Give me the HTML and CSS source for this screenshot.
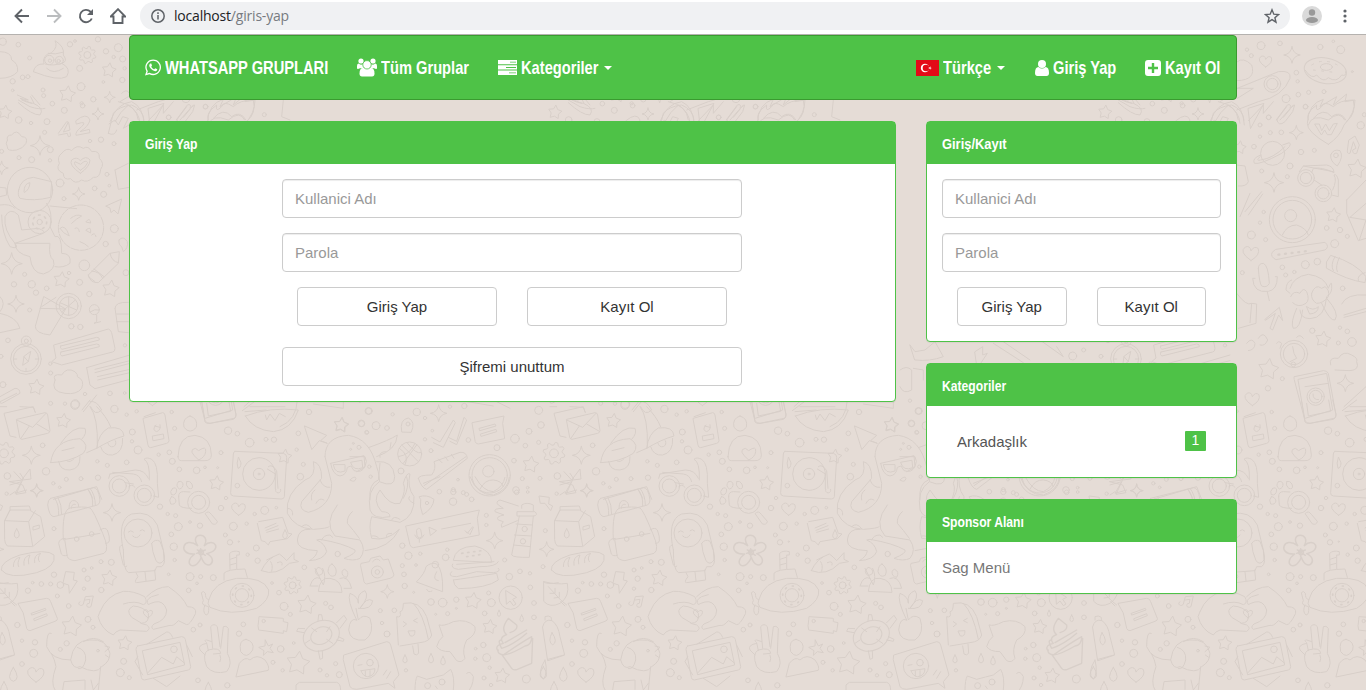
FILE: index.html
```html
<!DOCTYPE html>
<html lang="tr">
<head>
<meta charset="utf-8">
<title>Giriş Yap</title>
<link rel="stylesheet" href="styles.css">
</head>
<body>
<svg class="wallpaper" width="1366" height="690" viewBox="0 0 1366 690" aria-hidden="true">
<defs><g id="tile">
<g transform="translate(-10 400) scale(.33333)">
<path d="M78 112L60 108L42 40L130 20L136 38M80 58L165 38Q172 38 173 45L180 92Q180 98 173 100L96 118Q90 118 89 112Z M80 60L128 82L168 40M92 116L118 78M178 94L140 72"/>
<path d="M182 188Q190 120 270 116Q300 135 280 160Q240 186 182 188ZM212 130Q250 75 285 85Q292 100 275 118M216 152L252 143M206 184Q210 212 240 210Q272 206 270 170M290 158L322 144Q325 50 300 20M320 20Q350 50 362 80M320 145Q325 100 355 84Q400 78 402 108Q365 118 320 145M332 140Q340 168 368 165Q400 158 398 115M230 182Q240 190 252 176M354 130A12 12 0 1 0 376 122M276 30L300 0M300 5Q320 0 335 30Q315 50 302 20"/>
<path d="M460 55L518 38Q524 38 525 45L537 122Q537 128 530 130L482 143Q475 143 474 136Z M462 50L496 38M488 108L520 102L522 116L490 122ZM498 75Q484 90 500 95Q514 90 510 74M494 78L510 82"/>
<path d="M600 48Q625 55 619 82Q600 105 582 82Q576 55 600 48ZM564 170Q566 106 615 106Q664 112 664 165Q664 182 645 182H575Q564 182 564 170ZM626 180Q590 150 616 145L626 152Q650 135 647 155Q645 172 626 180Z"/>
<path d="M635 5L645 66Q650 72 660 70L732 55Q740 52 738 42L728 0M650 10L655 48L722 34L716 0M766 48Q840 20 925 30Q905 90 850 95Q790 90 766 48ZM826 45L830 60L840 42L855 62L868 40L886 50M757 32L800 0M780 20H885"/>
<path d="M735 154L880 160Q890 162 890 172L883 290Q882 297 874 297L730 288Q721 287 722 278L730 162Q731 154 735 154ZM835 200Q845 190 860 212L864 265M832 207L856 222V266M745 172Q738 190 744 205Q752 205 753 190ZM857 268A8 8 0 1 0 872 268"/><circle cx="807" cy="222" r="49"/><circle cx="807" cy="222" r="17"/><circle cx="807" cy="222" r="3"/><circle cx="742" cy="257" r="7"/>
<path d="M72 215L95 240L120 207L123 237L58 245L98 255L108 278L78 283L100 235M100 235L90 220"/>
<path d="M360 222L436 210Q465 210 475 235M368 217L430 222Q450 225 455 245M478 240Q480 185 462 178Q470 170 485 178Q505 190 502 250L506 292L490 288M405 248L430 252M356 235L360 222M416 260Q425 250 435 262"/><circle cx="388" cy="258" r="31"/><circle cx="388" cy="258" r="21"/><circle cx="463" cy="286" r="31"/><circle cx="463" cy="286" r="21"/>
<path d="M182 295L310 263Q325 262 330 300Q330 315 315 317L192 350Q178 350 173 315Q173 300 182 295ZM194 294Q208 315 206 346M203 290Q216 315 215 343M293 267Q310 285 308 318M300 265Q316 285 316 316M237 325Q237 298 255 302Q267 308 266 320M244 325Q245 309 256 313"/>
<path d="M220 420Q215 330 240 324Q280 318 300 324Q310 330 338 400Q360 450 342 460L255 482Q235 480 232 470L224 418Q280 410 330 400M226 415Q208 415 206 430L214 462Q220 470 231 466M330 390Q345 380 352 390Q360 410 358 423Q355 432 346 430"/><circle cx="260" cy="417" r="7"/><circle cx="305" cy="402" r="7"/>
<path d="M44 362L60 330L118 330L152 350L164 410L128 440L52 438Q44 430 44 420ZM44 362L116 365L128 438M116 365L136 332M60 330L60 320L118 318L122 330M60 330L44 362M130 380L148 375V385L130 390ZM80 386Q65 410 80 414Q96 410 80 386"/>
<path d="M34 510Q30 485 90 465Q170 445 192 465Q200 500 140 518Q55 540 34 510ZM70 500Q70 475 90 472Q80 490 86 500M102 496Q98 470 120 465Q112 480 116 492M134 488Q130 465 152 460Q140 475 148 485"/>
<path d="M400 450Q380 360 425 342Q480 330 502 375L520 450Q530 490 515 500L500 500L495 512L415 518Q400 510 400 450ZM398 435Q385 435 390 455L400 495Q410 505 410 498M485 430Q495 415 510 424Q524 450 522 480Q510 498 498 482Q486 455 485 430M438 518L444 530Q430 548 440 548L497 540L494 510M465 516L468 542M415 396Q422 388 430 396M450 392Q457 385 464 393M428 408Q441 420 450 405"/><circle cx="444" cy="399" r="42"/>
<path d="M566 290Q565 275 580 275L600 276M566 290L568 315Q572 325 605 325M548 265Q538 275 544 284Q558 288 560 270Q558 260 548 265M565 245Q555 258 568 267Q580 265 579 250Q574 240 565 245M590 245Q585 255 596 265Q610 270 607 255Q600 240 590 245M544 290Q535 300 542 312Q555 315 558 303Q555 290 544 290M646 340Q655 330 664 343L682 364Q680 376 668 372Z"/><circle cx="626" cy="307" r="33"/><circle cx="626" cy="307" r="21"/>
<g stroke-width="4.5"><path d="M623 437C595 395 665 395 643 437C672 410 700 450 650 461C690 480 650 520 634 472C615 520 575 490 614 462C560 465 580 405 623 437ZM632 446V470M620 460L646 450M622 450L646 466"/><circle cx="633" cy="457" r="7"/></g>
<path d="M656 600Q670 545 740 535Q820 530 836 570Q840 600 800 625Q720 650 660 622Q650 610 656 600ZM702 540V520Q710 508 765 507L772 532M720 508L719 460Q730 450 748 455V465H740L740 506M720 478L738 472M720 495L738 490M656 600Q645 595 646 580Q640 570 634 578L640 602Q630 615 656 620Q658 645 648 645Q636 635 645 615"/><circle cx="756" cy="586" r="36"/><circle cx="756" cy="586" r="20"/><circle cx="756" cy="586" r="28" stroke-dasharray="3 19" stroke-width="5"/>
<path d="M330 635Q350 585 400 574Q430 572 464 590Q475 610 460 614Q435 600 400 612M330 635L324 650Q335 690 370 705Q375 695 390 690L470 694Q485 685 470 675L452 670Q480 670 475 640Q460 620 430 618Q405 630 425 652L452 668M470 590Q500 560 535 560Q580 590 592 620Q620 620 617 640Q600 675 590 674L565 662Q550 680 540 676L490 688Q480 682 492 672Q530 660 530 630Q520 600 495 606Q480 610 475 614Q465 600 485 590L505 584"/>
<path d="M806 365L878 352L895 400L906 402L892 416L840 425L835 435L825 425L814 422L802 370M825 384L858 370M828 391L864 377M830 397L866 387"/>
<path d="M814 512Q830 475 868 462Q880 470 890 482L912 458L912 478L926 485L898 490Q860 530 814 512ZM842 485Q850 495 845 514M862 488Q880 480 876 495M830 480L850 470"/>
<path d="M85 610L170 595Q180 595 182 605L202 655Q204 662 195 664L120 692Q112 692 110 685L100 640ZM124 640L166 625L168 630L126 645ZM132 656L170 641L172 647L134 662Z"/>
<path d="M12 545Q50 555 82 550Q90 590 60 610Q30 625 12 605ZM25 560L62 600L80 615M30 580H45V565M42 594L58 592L58 577M62 605L75 618"/>
<path d="M15 660V650Q25 645 34 652V660M8 680Q15 655 36 662Q55 675 60 710L74 765L24 782ZM36 698Q22 725 38 735Q55 725 36 698ZM24 778L72 765"/>
<path d="M228 515L253 517L250 540L262 543L238 580L236 555L220 550ZM270 605A7 6 0 1 0 280 612L286 590L310 588L304 615A7 6 0 1 1 298 610L300 598L286 600"/>
<path d="M184 700Q170 690 170 740Q185 780 242 780Q250 720 300 720Q350 715 360 760Q360 785 335 800Q320 825 270 800Q250 810 242 780M262 742Q290 750 287 780Q280 810 265 806M184 760Q195 780 198 800Q180 850 195 870M332 800L325 870M345 738L360 742L345 755M346 765L356 772M218 870L222 845L285 840V868M303 840L310 870L325 850M280 725Q310 705 340 725"/><circle cx="324" cy="752" r="4"/>
<path d="M443 738L575 710Q584 710 586 718L602 800Q602 808 595 810L463 840Q455 840 454 832L438 748Q438 740 443 738ZM458 752L570 727L584 795L474 824ZM474 818L515 772L550 792L560 770L584 790M470 733L530 696Q540 694 548 712M490 835L530 860L570 828M590 735L607 770M443 770L435 785L458 825"/><circle cx="552" cy="748" r="10"/>
<path d="M668 745L662 680Q672 668 682 680L690 740M692 745L700 680Q708 675 715 685L712 760Q730 790 710 815Q670 825 650 800Q635 760 655 750Q690 740 692 760L670 762M655 752L650 728Q640 720 650 720L665 725M650 730Q622 735 630 750L645 765M690 765Q695 775 690 785"/>
<path d="M768 718Q795 725 788 750Q770 780 752 755Q745 720 768 718ZM738 830L748 790Q765 768 780 780Q800 760 825 780Q840 800 835 810ZM808 650L880 655L880 665L894 668L890 695L880 692V700L806 690Q802 680 806 660ZM826 720L835 738L848 732L840 745L850 758L832 755L820 766L822 752L806 742L824 738Z"/><circle cx="821" cy="663" r="5"/>
<path d="M944 78L1010 106L992 122L1012 130L988 122L966 148Z"/>
<path d="M998 505Q1010 530 1000 555Q985 525 975 505M985 502Q1000 505 998 520Q980 535 976 515ZM1026 492Q1045 505 1036 526Q1020 535 1014 515Q1015 495 1026 492ZM1064 508Q1080 515 1070 532Q1055 530 1056 515ZM985 573Q990 530 1020 535Q1055 540 1056 576ZM960 558Q970 525 990 535M984 558H962M1050 535Q1075 525 1085 565L1062 565"/>
<path d="M1100 660Q1070 600 1080 580Q1105 590 1105 610Q1100 580 1125 572Q1140 590 1110 625Q1130 590 1148 602Q1145 630 1105 625M1098 625L1105 660Q1120 640 1140 655Q1155 700 1125 720Q1080 725 1076 690Q1080 650 1100 660"/>
<ellipse cx="994" cy="707" rx="56" ry="44" transform="rotate(-25 994 707)"/><ellipse cx="994" cy="707" rx="33" ry="25" transform="rotate(-25 994 707)"/><path d="M984 662L986 644L995 644L998 660M1040 668L1062 646L1070 658L1050 685M942 698L920 694L924 685L944 686M1045 710L1062 718L1060 724L1040 720M985 752L990 778L998 775L997 752M945 730L960 720M965 684L980 695M1020 680L1010 695M1028 730L1010 718"/>
</g>
<g transform="translate(280 400) scale(.33333)">
<path d="M135 170Q135 110 205 106Q270 115 290 200Q300 230 298 245Q345 265 344 230Q340 180 290 185M135 170L155 250Q155 320 85 337Q55 330 65 305L125 235Q125 190 100 185Q110 230 75 240Q15 280 22 340Q45 385 100 388Q145 385 148 380M152 190L252 167L255 200Q245 220 222 212L213 198L202 202Q200 225 180 228Q158 225 152 190ZM160 195Q165 225 195 213V195ZM212 188Q220 215 248 203L246 182ZM120 240Q130 265 150 262M172 315Q130 370 165 408L240 420Q260 450 240 475Q220 485 192 475Q230 460 225 450Q190 430 120 418L110 420Q135 430 140 455Q130 480 88 482Q110 470 112 452Q50 450 52 420Q55 385 90 388M290 170Q350 150 352 105Q330 120 265 143M298 245Q260 270 270 330Q280 360 330 350Q330 335 305 335Q275 300 300 270Q330 320 360 310Q380 270 370 250Q380 215 390 222Q380 260 402 290Q405 350 360 367L275 350Q265 380 275 415Q320 425 358 388Q330 445 255 452M217 335Q200 350 202 370Q220 390 238 415M300 172Q295 155 318 155M330 145L333 128M95 300Q90 280 105 270M108 310Q118 290 132 300M22 325Q40 325 38 345M65 380Q80 365 95 386M335 360Q340 345 360 358M388 290Q380 300 402 310M275 408Q290 405 298 416M320 410Q315 400 335 400M210 240Q225 225 228 235Q225 250 210 240M125 420Q130 405 150 405L158 412"/><circle cx="220" cy="130" r="3"/><circle cx="237" cy="142" r="6"/><circle cx="212" cy="148" r="3"/><circle cx="268" cy="200" r="5"/><circle cx="272" cy="230" r="5"/>
<circle cx="389" cy="162" r="36"/><path d="M358 145Q390 165 375 195M355 170Q390 165 405 130M380 127Q410 165 423 158M370 190L410 135M365 135L415 185"/>
<path d="M455 112L480 126L520 60L526 68L490 142L460 128M505 112L530 124L552 52L560 60L530 134L510 124"/>
<path d="M577 68L672 48L668 70L674 116L595 132Q588 132 586 126ZM598 85L645 72L648 78L600 92ZM602 102L648 88L650 95L604 109Z"/>
<path d="M415 235Q415 225 455 225Q470 205 462 185L540 157Q560 155 562 175L440 268Q425 265 415 235ZM432 257L558 170M475 177L486 188M495 170L504 182M514 163L522 175"/>
<circle cx="629" cy="226" r="62"/><circle cx="629" cy="226" r="53"/><circle cx="625" cy="214" r="17"/><path d="M600 267Q615 238 640 240Q665 242 670 260"/>
<path d="M378 378L598 330L592 355L598 405L400 443Q392 442 390 435ZM448 382L470 392L452 406ZM485 387L572 370M410 390Q415 380 422 388L426 410Q418 418 412 410ZM404 405Q418 430 432 405M418 418V427M555 392L562 400L578 380M562 396L570 404L580 382M418 290Q440 282 462 298Q460 325 428 344Q418 320 422 300Z"/><circle cx="441" cy="309" r="5"/>
<path d="M725 325V315Q740 305 760 315V332M712 335L765 335Q775 345 762 348H712ZM718 348L695 465Q700 473 748 472L760 348M708 372L758 375M703 405L755 408M700 435L752 440M715 318L660 300Q645 305 655 315L670 325Q640 325 645 335L672 345Q645 350 655 360L670 365Q660 375 665 382L712 362"/><circle cx="734" cy="387" r="8"/><circle cx="729" cy="424" r="8"/>
<path d="M520 480Q525 440 585 438Q635 450 635 486ZM518 492Q510 505 535 508L600 500Q650 500 655 485M515 515Q500 530 530 530L590 515L640 518Q665 515 655 505M520 540Q560 535 650 520L655 540Q620 565 535 566Q520 555 520 540M530 493L642 485"/><path stroke-dasharray="4 14" stroke-width="5" d="M545 460L605 452M560 470L600 464"/>
<path d="M410 545Q435 520 438 500Q455 485 470 492Q490 510 488 574ZM440 568Q445 580 456 573M470 515Q455 540 475 542"/><circle cx="466" cy="494" r="10"/>
<path d="M244 490L268 485L272 475L300 468L310 480L325 477L342 525Q340 533 330 535L260 552Q255 552 252 545L242 498ZM278 485Q290 470 300 482"/><circle cx="292" cy="516" r="18"/><circle cx="292" cy="516" r="7"/>
<circle cx="692" cy="593" r="35"/><path d="M678 572L710 592L698 598L708 612L700 617L690 603L680 612Z"/>
<path d="M355 735L350 650Q365 655 360 635Q370 635 370 610Q420 600 440 650L455 705Q450 725 420 728L360 738M400 610Q430 640 445 718M398 738L402 762Q410 768 416 760L414 732M370 665L380 672L370 680M412 655L400 662L412 668M385 693L405 692Q405 712 392 708Z"/>
<path d="M478 675Q490 680 520 665Q560 655 585 680Q590 705 560 720Q545 750 555 775Q545 790 530 782L510 755Q480 755 470 740Q475 720 488 710Z"/>
<path stroke-width="4" d="M652 750Q645 735 670 730Q655 712 680 704Q660 688 685 655L710 675Q715 690 690 698M675 728L740 690M665 720Q650 720 665 745Q700 735 740 700M655 750Q650 760 670 765Q720 730 755 710Q755 735 735 738Q680 770 665 763L695 805Q700 812 712 808L755 790L758 715"/>
<path d="M192 765L320 725Q330 725 332 735L357 825L340 845L345 865L325 850L230 868Q215 868 210 860L190 780Z"/><circle cx="258" cy="798" r="38"/><circle cx="270" cy="788" r="10"/><path d="M234 796L246 794M243 812L285 806Q285 828 262 830Q248 828 243 812M256 813V828M270 812V828M310 825L320 810M320 835L332 815"/>
<path d="M405 870Q405 840 412 828L440 838Q470 830 490 825L512 808Q525 830 520 870M560 820Q570 810 580 830Q580 860 560 880M48 870V855L58 847H170Q182 850 182 870M466 858L472 866M365 95Q358 58 385 54Q408 65 394 96ZM790 545Q800 555 835 548M795 780Q770 820 790 838Q805 820 795 780"/><circle cx="443" cy="857" r="9"/><circle cx="486" cy="846" r="9"/><circle cx="384" cy="72" r="6"/>
<path d="M0 80Q50 60 52 0M100 12L190 25V0M545 2L640 18M640 0L690 25M778 288L808 292L806 312L818 318L812 332L795 310H782Z"/>
</g>
<g transform="translate(0 100) scale(.33333)">
<circle cx="90" cy="270" r="68"/><path d="M56 270Q62 235 100 232L155 245L152 292Q100 305 60 295Q52 285 56 270ZM72 275Q72 250 90 248Q88 270 74 277ZM0 262L18 264L20 285L0 290M0 315Q30 310 45 325M5 345Q5 400 30 440Q60 450 45 430Q10 390 15 350Q30 320 55 345L65 390L115 385Q140 395 130 400L45 430Q45 460 90 470Q95 520 130 522Q170 510 160 480Q145 470 150 430L45 430M140 310Q160 340 150 380L165 410Q185 400 185 460Q215 460 210 490Q190 505 165 500M150 318L230 326"/><circle cx="119" cy="366" r="35"/><circle cx="119" cy="366" r="8"/><circle cx="119" cy="366" r="21" stroke-dasharray="5 14" stroke-width="5"/>
<circle cx="243" cy="383" r="68" stroke-dasharray="24 4"/><path d="M180 385Q195 370 208 408Q188 400 180 385M212 355Q230 340 245 348Q230 355 215 370M258 390Q275 375 272 398ZM258 365Q270 350 272 368ZM225 385Q235 378 238 395M275 405Q285 395 288 410M240 425Q255 430 265 440"/>
<path d="M185 160Q200 140 215 152Q230 132 250 145Q265 135 275 155Q300 150 298 175Q315 190 302 208Q300 235 280 232Q262 250 245 240Q225 255 212 236Q190 242 190 220Q165 210 178 190Q170 170 185 160Z"/><path d="M241 220Q205 195 215 180Q230 168 241 182Q258 165 270 180Q270 200 241 220ZM241 211Q218 193 225 185L242 193Q258 177 263 188Q258 202 241 211"/>
<path d="M175 100L200 65L205 66L190 96L210 90L206 68M176 105L202 100L205 110L212 108L210 98M228 62Q260 35 270 60Q265 80 240 95L268 88L270 98L228 106Q225 95 245 80Q265 60 230 72Z"/>
<path d="M22 120Q18 105 35 105Q50 85 65 110Q85 110 78 130Q70 145 50 150Q20 155 22 140Q15 130 22 120ZM65 0Q85 10 100 10Q135 25 120 45Q95 45 55 8"/>
<path d="M325 100L340 40Q355 20 395 15Q430 30 432 60M325 100Q345 110 350 90M327 72L345 60L355 75L368 50L385 55L370 85L395 70M355 5Q410 15 415 60M445 62L490 15V40L520 5M530 60L560 20M540 60L580 15M625 60Q615 40 650 15Q645 40 665 20Q670 0 700 20Q720 0 760 0Q770 40 740 65M640 55Q670 20 695 50Q720 30 738 60M850 0L845 50L870 60"/>
<path d="M318 318L365 297L354 342L342 330L333 338L330 325ZM345 210L385 190M345 210L355 268L388 262M265 525L330 460L358 455L355 490L295 548Q270 550 265 525ZM275 513Q300 515 308 535M330 460Q335 485 355 488M282 507L312 530M265 530L285 545"/>
<path d="M132 590L197 627L150 705Q105 700 106 680ZM120 625L195 627M168 592L125 620"/><circle cx="206" cy="618" r="38"/><circle cx="206" cy="618" r="28"/><path d="M206 590V646M180 608L230 630M185 636L226 600"/><circle cx="283" cy="629" r="15"/><path d="M270 636Q285 625 297 630M290 645V665L282 670L302 665"/>
<circle cx="78" cy="777" r="46"/><circle cx="78" cy="777" r="38"/><circle cx="79" cy="723" r="15"/><circle cx="79" cy="723" r="6"/><path d="M92 755L85 785L68 796L72 770ZM72 770L85 785M42 777H50M106 777H114M78 805V812"/>
<path d="M162 735L325 687Q333 690 335 698L345 745Q345 755 338 756L185 795L155 785L167 775ZM182 738L290 712Q300 712 298 720L186 748Q178 745 182 738ZM183 756L290 732Q300 732 298 740L186 768Q178 765 183 756ZM260 803L390 765M260 803L270 855L285 866L390 838M285 808L390 782M292 830L390 808M285 818L390 790M293 840L390 818"/>
<path d="M165 840Q155 820 185 825Q200 800 225 815Q235 825 232 830Q255 840 245 865Q230 885 195 880Q150 875 165 840ZM345 625Q345 605 385 607M345 625L355 695L385 698M350 642H385M350 665H385M0 640Q50 650 60 685L0 698M0 590Q20 610 0 635M0 890L45 865Q60 865 60 880L15 905Q0 915 0 905L50 880M0 920H20M60 920L100 922L105 935M250 935L290 885M357 420Q370 405 382 425Q385 445 370 455L365 440Q355 435 357 420"/>
</g>
<g transform="scale(.33333)">
<path d="M0 155Q35 155 35 180Q55 190 53 215Q35 235 0 235M100 215Q105 190 132 192Q125 165 155 158Q175 140 165 122Q195 140 190 165Q205 185 185 190Q215 205 200 230Q175 245 100 215M135 192Q160 200 190 188M145 160Q165 165 188 157M140 205Q160 225 190 205M52 285L85 300L60 295L95 310M55 300L90 320Q120 330 135 325M92 290L102 310M120 315L95 285M360 305L385 290M365 280Q380 265 387 278"/><circle cx="148" cy="180" r="14"/><circle cx="178" cy="181" r="12"/><circle cx="150" cy="182" r="5"/><circle cx="176" cy="183" r="5"/>
</g>
<g transform="translate(100 30) scale(.33333)">
<ellipse cx="376" cy="122" rx="64" ry="38" transform="rotate(10 376 122)"/><ellipse cx="379" cy="111" rx="18" ry="10"/><path d="M315 120Q335 150 350 135Q370 160 385 143Q410 160 425 135Q440 140 437 125"/><path stroke-dasharray="6 19" d="M335 105Q375 80 420 110M340 120L412 128"/>
<path d="M112 95Q130 80 155 105Q170 150 112 152M112 175L235 125Q275 120 270 145Q250 200 175 215L110 240M112 175H160L112 205M145 235L192 220L152 295Z"/><circle cx="217" cy="162" r="25"/><circle cx="217" cy="162" r="17"/>
<path d="M30 275Q50 220 95 215Q130 230 133 285M45 275Q60 245 85 225M85 225Q118 245 120 280"/>
<path d="M230 268L262 225Q275 220 270 235L284 225L278 245L255 275Q235 292 230 268ZM250 262L270 238"/>
<path d="M385 343Q320 305 322 280Q325 220 370 208L360 230L410 200L400 225L440 192L435 215L465 210Q465 250 432 285Q420 320 385 343ZM325 285Q335 250 385 270Q420 240 434 270M345 282H358L365 302L377 282L388 302L400 282L412 280L394 314H382L374 300L365 314Z"/>
<circle cx="218" cy="370" r="36"/><path d="M182 375Q155 385 163 400Q180 405 245 370Q280 345 268 338L248 345M180 380Q165 395 182 390Q220 385 255 350"/>
<circle cx="318" cy="444" r="25"/><circle cx="318" cy="444" r="17"/><circle cx="370" cy="490" r="25"/><circle cx="370" cy="490" r="17"/><path d="M298 425L310 408L380 405Q402 410 402 428Q365 410 340 415L335 428M310 408L400 425M342 450L365 465M395 495L415 500L415 450Q410 430 402 435Q412 450 398 480"/>
<circle cx="277" cy="569" r="69"/><circle cx="277" cy="569" r="58"/><circle cx="272" cy="557" r="18"/><path d="M247 615Q260 585 290 585Q320 595 325 615M228 658L375 637Q390 650 375 660L228 689Q210 680 216 668ZM380 695L392 676Q470 700 498 740L495 758Q440 750 380 715ZM405 680Q390 705 400 722M418 683Q405 710 412 725M475 752Q470 735 495 728"/><path d="M235 674L330 662" stroke-dasharray="3 17" stroke-width="7"/>
<path d="M175 715Q175 700 190 700Q205 705 208 760Q200 775 185 768Q178 760 175 715ZM165 745L158 745Q160 790 205 784Q232 780 232 740L226 740M202 786L208 812M195 868L238 832L248 872L236 855L218 900L210 895L226 850L198 870Z"/>
<path d="M270 775Q280 740 325 733Q375 740 385 775Q395 750 395 765Q398 790 380 800Q375 865 330 866Q300 865 300 840M270 790L258 780Q258 755 275 750M272 800Q280 780 300 790Q310 770 320 785Q330 810 318 820Q295 835 278 818M335 790Q345 760 365 775L375 770Q390 780 385 800Q370 820 350 820Q332 810 335 790M290 835Q270 880 280 895Q300 900 308 840M365 820Q390 875 405 870Q420 850 380 805M320 830Q340 845 355 830Q355 850 330 852Z"/>
<circle cx="282" cy="972" r="41"/><circle cx="282" cy="972" r="32"/><path d="M278 950L282 970L290 985L270 995M290 922Q300 910 310 925M230 940Q235 930 245 940L240 955"/>
<path d="M447 330L465 318L478 345L470 370Q458 375 458 360L468 355L460 335L450 370Q440 372 442 362ZM392 375Q400 355 420 362Q432 380 412 408Q390 395 392 375M110 405L135 408L145 455Q140 470 115 468M120 560L150 490M135 545L185 485M145 555L188 492M110 790Q140 830 155 820L170 822L168 880L115 895M155 820L150 878M440 510L498 450M440 510V550L475 632L498 625M450 562L498 570L478 630M498 520L450 562M425 822Q440 790 498 795M432 855L498 835M432 862L498 845M140 940Q155 920 165 940Q165 960 145 962M175 925Q190 900 203 930Q195 950 180 945"/><circle cx="408" cy="376" r="7"/>
</g>
<g transform="translate(-200 340) scale(.33333)">
<path d="M1183 110L1270 92Q1282 92 1285 100L1308 225Q1308 235 1300 238L1230 250Q1220 250 1215 242L1183 120ZM1195 118L1280 100L1298 210L1215 235ZM1215 140L1285 130M1332 200L1398 140M1335 215L1398 210M1292 75Q1285 50 1315 55Q1330 30 1355 45Q1375 55 1370 65Q1380 90 1350 92L1305 90"/><circle cx="1247" cy="170" r="26"/><circle cx="1247" cy="170" r="19"/><path d="M1239 162Q1238 180 1256 179"/>
<path d="M30 15L45 35L75 30L105 5L130 50Q90 65 45 60ZM225 35L248 20V45L262 40L232 85ZM310 5L390 60M280 10L370 68M420 0L490 50L470 20M0 90Q20 75 35 90V150Q10 165 0 140M40 85L70 90V120M0 350H45Q60 380 20 395M60 480Q55 430 85 420L90 370M160 475Q180 440 170 410M220 430L270 410M360 410Q380 465 430 465Q475 450 478 412M375 410Q400 455 430 455Q460 440 465 412M630 435L665 425L645 460L680 450M760 478L890 440L905 478M630 465L645 455M865 450L878 475"/>
</g>
</g></defs>
<use href="#tile" x="-550"/><use href="#tile"/><use href="#tile" x="550"/><use href="#tile" x="1100"/>
</svg>
<div class="browser">
  <div class="browser-nav">
    <svg width="16" height="16" viewBox="0 0 16 16"><path d="M15 8H2M8 1.500L1.500 8L8 14.500"/></svg>
    <svg class="faded" width="16" height="16" viewBox="0 0 16 16"><path d="M1 8H14M8 1.500L14.500 8L8 14.500"/></svg>
    <svg width="16" height="16" viewBox="0 0 16 16"><path d="M13.800 10.500A6.200 6.200 0 1 1 12.500 3.700L14 5.500"/><path class="solid" d="M15 1V7H9Z"/></svg>
    <svg width="16" height="16" viewBox="0 0 16 16"><path d="M.8 8.500L8 1.200L15.200 8.500H12.500V15H3.500V8.500Z"/></svg>
  </div>
  <div class="address">
    <svg width="14" height="14" viewBox="0 0 14 14"><circle cx="7" cy="7" r="6.200"/><path d="M7 6V10.500M7 3.300V4.900"/></svg>
    <span class="url">localhost<span>/giris-yap</span></span>
    <svg class="bookmark" width="16" height="16" viewBox="0 0 16 16"><path d="M8 1.800L9.800 6.200L14.500 6.600L10.900 9.700L12 14.200L8 11.700L4 14.200L5.100 9.700L1.500 6.600L6.200 6.200Z"/></svg>
  </div>
  <svg class="avatar" width="20" height="20" viewBox="0 0 20 20"><circle cx="10" cy="10" r="10" fill="#dadada"/><circle cx="10" cy="6.500" r="3.200" fill="#999"/><ellipse cx="10" cy="14" rx="6" ry="3" fill="#999"/></svg>
  <svg class="more" width="4" height="14" viewBox="0 0 4 14"><circle cx="2" cy="2" r="1.600"/><circle cx="2" cy="7" r="1.600"/><circle cx="2" cy="12" r="1.600"/></svg>
</div>
<div class="container">
  <nav class="navbar">
    <a class="brand"><svg width="16" height="17" viewBox="0 0 1536 1600"><path d="M985 878q13 0 97.500 44t89.500 53q2 5 2 15 0 33-17 76-16 39-71 65.500t-102 26.500q-57 0-190-62-98-45-170-118t-148-185q-72-107-71-194v-8q3-91 74-158 24-22 52-22 6 0 18 1.500t19 1.500q19 0 26.500 6.500t15.500 27.500q8 20 33 88t25 75q0 21-34.500 57.500t-34.500 46.500q0 7 5 15 34 73 102 137 56 53 151 101 12 7 22 7 15 0 54-48.500t52-48.500zm-203 530q127 0 243.500-50t200.500-134 134-200.500 50-243.500-50-243.500-134-200.500-200.500-134-243.500-50-243.500 50-200.500 134-134 200.500-50 243.500q0 203 120 368l-79 233 242-77q158 104 345 104zm0-1382q153 0 292.500 60t240.500 161 161 240.500 60 292.500-60 292.500-161 240.500-240.500 161-292.500 60q-195 0-365-94l-417 134 136-405q-108-178-108-389 0-153 60-292.500t161-240.500 240.500-161 292.500-60z"/></svg><span>WHATSAPP GRUPLARI</span></a>
    <a class="groups"><svg width="20" height="19" viewBox="0 0 20 19"><circle cx="4" cy="3" r="2.600"/><circle cx="16" cy="3" r="2.600"/><path d="M0 10V8Q0 5.500 1.500 5.500Q4 7.500 5.500 6L7 10.300H3Q0 12 0 10ZM20 10V8Q20 5.500 18.500 5.500Q16 7.500 14.500 6L13 10.300H17Q20 12 20 10Z"/><path d="M2.500 15.500Q2.500 10 6 10H14Q17.500 10 17.500 15.500Q17.500 18.500 15 18.500H5Q2.500 18.500 2.500 15.500Z"/><circle class="head" cx="10" cy="6.800" r="4.200"/></svg><span>Tüm Gruplar</span></a>
    <a class="categories"><svg width="19" height="15" viewBox="0 0 19 15"><path fill-rule="evenodd" d="M0 0H19V4.300H0ZM0 5.300H19V9.600H0ZM0 10.600H19V15H0ZM12 1.700V2.500H18V1.700ZM8 7V7.900H18V7ZM11 12.400V13.300H18V12.400Z"/></svg><span>Kategoriler</span><i class="caret"></i></a>
    <a class="language"><svg width="23" height="16" viewBox="0 0 23 16"><path fill="#e30a17" d="M0 0H23V16H0Z"/><circle cx="9" cy="8" r="4.200"/><circle fill="#e30a17" cx="10" cy="8" r="3.300"/><path d="M12 8L13.500 7.500L14.400 6.200L14.500 7.700L16 8L14.500 8.400L14.400 9.800L13.500 8.600Z"/></svg><span>Türkçe</span><i class="caret"></i></a>
    <a class="login"><svg width="14" height="16" viewBox="0 0 14 16"><circle cx="7" cy="4" r="4"/><path d="M0 13Q0 7 3.500 7Q7 10 10.500 7Q14 7 14 13Q14 16 11.500 16H2.500Q0 16 0 13Z"/></svg><span>Giriş Yap</span></a>
    <a class="signup"><svg width="16" height="16" viewBox="0 0 16 16"><path fill-rule="evenodd" d="M3 0H13Q16 0 16 3V13Q16 16 13 16H3Q0 16 0 13V3Q0 0 3 0ZM6.800 3V6.800H3V9.200H6.800V13H9.200V9.200H13V6.800H9.200V3Z"/></svg><span>Kayıt Ol</span></a>
  </nav>
  <div class="columns">
    <section class="panel main">
      <h3><span>Giriş Yap</span></h3>
      <form class="login-form">
        <input type="text" placeholder="Kullanici Adı"><input type="text" placeholder="Parola">
        <div class="buttons"><button type="button">Giriş Yap</button><button type="button">Kayıt Ol</button></div>
        <button class="forgot" type="button">Şifremi unuttum</button>
      </form>
    </section>
    <aside>
      <section class="panel">
        <h3><span class="wide">Giriş/Kayıt</span></h3>
        <form class="side-form">
          <input type="text" placeholder="Kullanici Adı"><input type="text" placeholder="Parola">
          <div class="buttons"><button type="button">Giriş Yap</button><button type="button">Kayıt Ol</button></div>
        </form>
      </section>
      <section class="panel">
        <h3><span>Kategoriler</span></h3>
        <div class="category"><a>Arkadaşlık</a><span class="badge">1</span></div>
      </section>
      <section class="panel">
        <h3><span>Sponsor Alanı</span></h3>
        <p class="sponsor">Sag Menü</p>
      </section>
    </aside>
  </div>
</div>
<script src="wallpaper.js"></script>
</body>
</html>
```

FILE: styles.css
```css
* { box-sizing: border-box; }
body { margin: 0; height: 690px; overflow: hidden; background: #e5dcd6; color: #777; font: 15px/22px "Liberation Sans", Arial, sans-serif; }
.wallpaper { position: absolute; inset: 0; z-index: -1; fill: none; stroke: #d8cfc9; stroke-width: 3px; stroke-linecap: round; stroke-linejoin: round; }
.browser { display: flex; align-items: center; height: 35px; padding: 0 0 2px 14px; background: #fff; border-bottom: 1px solid #b5b2af; }
.browser svg { display: block; flex: none; fill: none; stroke: #5f6368; stroke-width: 1.9; }
.browser-nav { display: flex; gap: 16px; width: 126px; }
.browser .faded { stroke: #bbbdbf; }
.browser .solid { fill: #5f6368; stroke: none; }
.address { display: flex; align-items: center; width: 1150px; height: 28px; padding: 0 10px 0 11px; border-radius: 14px; background: #f0f1f3; }
.address svg { stroke-width: 1.5; }
.url { margin-left: 9px; color: #202124; font: 14px/20px "Open Sans", "Noto Sans", sans-serif; letter-spacing: -.2px; }
.url span { color: #777b80; }
.address .bookmark { margin-left: auto; stroke-width: 1.4; }
.browser .avatar { margin-left: 12px; stroke: none; }
.browser .more { margin-left: 21px; fill: #5f6368; stroke: none; }
.container { width: 1108px; margin: 0 auto; }
.navbar { display: flex; align-items: center; height: 65px; padding: 0 14px 0 15px; border: 1px solid #3a9b30; border-radius: 4px; background: #4ec247; color: #fff; font: bold 19px/24px "Liberation Sans", Arial, sans-serif; }
.navbar a { display: flex; align-items: center; flex: none; }
.navbar svg { flex: none; fill: #fff; }
.navbar .head { stroke: #4ec247; stroke-width: .8; }
/* Labels are condensed horizontally; their width is that of the condensed text. */
.navbar span { flex: none; margin-left: 4px; white-space: nowrap; transform: scaleX(.772); transform-origin: left; }
.brand { width: 212px; }
.brand span { width: 163px; }
.groups { width: 141px; }
.groups span { width: 89px; }
.categories { width: 115px; }
.categories span { width: 77px; }
.language { width: 91px; margin-left: auto; }
.language span { width: 48px; }
.login { width: 82px; margin-left: 28px; }
.login span { width: 64px; }
.signup { width: 77px; margin-left: 28px; }
.signup span { width: 57px; }
.caret { margin-left: 6px; border: 4px solid transparent; border-top-color: #fff; border-bottom: 0; }
.columns { display: flex; align-items: flex-start; gap: 30px; padding-top: 21px; }
.main { width: 767px; }
aside { display: flex; flex-direction: column; gap: 21px; width: 311px; }
.panel { border: 1px solid #4ec247; border-radius: 4px; background: #fff; box-shadow: 0 1px 1px rgba(0,0,0,.05); }
.panel h3 { height: 42px; margin: 0; padding: 11px 15px; background: #4ec247; color: #fff; font: bold 15px/22px "Liberation Sans", Arial, sans-serif; white-space: nowrap; }
.panel h3 span { display: inline-block; transform: scaleX(.81); transform-origin: left; }
.panel h3 .wide { transform: scaleX(.86); }
form { display: flex; flex-direction: column; gap: 15px; }
.login-form { width: 460px; margin: 0 0 0 152px; padding: 15px 0; }
.side-form { padding: 15px; }
input, button { display: block; width: 100%; height: 39px; border: 1px solid #ccc; border-radius: 4px; background: #fff; color: #333; font: inherit; }
input { padding: 0 12px; box-shadow: inset 0 1px 1px rgba(0,0,0,.075); }
input::placeholder { color: #999; opacity: 1; }
button { padding: 0; color: #333; }
.buttons { display: flex; gap: 30px; padding: 0 15px; }
.forgot { margin-top: 6px; }
.category { display: flex; justify-content: space-between; align-items: center; height: 71px; padding: 0 30px; }
.category a { color: #555; }
.badge { width: 21px; height: 20px; margin-bottom: 2px; border-radius: 1px; background: #4ec247; color: #fff; font-size: 14px; line-height: 19px; text-align: center; }
.sponsor { margin: 0; padding: 15px 15px 14px; }
```

FILE: wallpaper.js
```js
// Scatter the small repeated doodles of the wallpaper: [x, y, radius].
const tile = document.getElementById("tile");
const NS = "http://www.w3.org/2000/svg";
const add = (tag, attrs, parent) => {
  const el = document.createElementNS(NS, tag);
  for (const k in attrs) el.setAttribute(k, attrs[k]);
  parent.appendChild(el);
  return el;
};
const radial = (x, y, n, radius) => {
  const pts = [];
  for (let i = 0; i < n; i++) {
    const a = -Math.PI / 2 + 0.15 + i * 2 * Math.PI / n;
    const r = radius(i);
    pts.push((x + r * Math.cos(a)).toFixed(1) + " " + (y + r * Math.sin(a)).toFixed(1));
  }
  return "M" + pts.join("L") + "Z";
};
const shapes = {
  star: (x, y, r) => radial(x, y, 10, i => i % 2 ? r * 0.55 : r),
  gear: (x, y, r) => radial(x, y, 32, i => i % 4 < 2 ? r : r * 0.76),
  spark: (x, y, r) => `M${x} ${y - r}Q${x + r * .12} ${y - r * .12} ${x + r} ${y}Q${x + r * .12} ${y + r * .12} ${x} ${y + r}Q${x - r * .12} ${y + r * .12} ${x - r} ${y}Q${x - r * .12} ${y - r * .12} ${x} ${y - r}Z`,
  heart: (x, y, r) => `M${x} ${y + r * .9}Q${x - r * 1.6} ${y - r * .2} ${x - r * .7} ${y - r * .8}Q${x - r * .1} ${y - r} ${x} ${y - r * .3}Q${x + r * .4} ${y - r} ${x + r * .9} ${y - r * .6}Q${x + r * 1.2} ${y + r * .2} ${x} ${y + r * .9}Z`,
  drop: (x, y, r) => `M${x} ${y - r}Q${x - r * 1.1} ${y + r * .7} ${x} ${y + r}Q${x + r * 1.1} ${y + r * .7} ${x} ${y - r}Z`
};
const regions = [
  { at: [-10, 400],
    dots: [[255,15,13],[373,27,11],[410,44,5],[440,34,5],[545,36,5],[427,96,9],[426,124,5],[444,150,12],[554,85,6],[506,164,5],[538,157,7],[547,184,9],[568,208,7],[620,211,10],[645,202,4],[683,203,3],[693,158,6],[714,92,11],[742,101,7],[779,128,13],[828,118,6],[852,119,8],[957,36,8],[925,100,7],[920,149,5],[1114,70,10],[1130,97,6],[158,136,7],[168,214,11],[52,228,10],[50,281,5],[190,250,5],[229,238,6],[209,262,4],[273,236,6],[324,233,8],[322,184,5],[352,196,6],[410,187,7],[192,386,6],[510,320,8],[533,342,5],[557,347,6],[565,380,12],[600,366,4],[630,377,8],[544,403,7],[551,440,11],[554,480,5],[693,324,8],[708,294,5],[730,379,12],[770,371,5],[794,342,5],[824,331,12],[859,323,4],[706,405,6],[720,427,8],[746,425,2],[799,444,9],[773,464,5],[803,482,8],[931,230,10],[940,193,6],[943,502,7],[1043,462,8],[192,524,8],[128,548,4],[154,552,7],[182,552,6],[211,555,10],[114,572,8],[202,588,6],[236,618,7],[282,510,6],[305,504,4],[333,485,6],[364,487,9],[293,536,8],[282,566,5],[334,570,8],[294,658,9],[309,682,6],[536,523,4],[600,530,12],[621,550,4],[632,530,6],[670,533,9],[596,571,7],[760,673,7],[747,701,8],[846,549,4],[867,578,7],[882,619,12],[901,643,6],[1007,610,6],[1023,622,7],[82,675,8],[96,722,5],[135,727,8],[131,760,12],[96,792,7],[230,730,8],[211,748,6],[401,784,9],[391,818,12],[418,833,6],[610,689,7],[630,675,6],[624,841,7],[712,856,8],[872,747,10],[911,729,4],[849,787,6],[878,811,5],[990,810,6],[1011,826,5],[1048,824,9],[1037,791,6]],
    star: [[220,63,22],[679,250,22],[884,170,22],[1053,75,22],[357,535,24],[244,680,31],[404,730,22],[950,615,29],[924,790,36]], gear: [[42,160,33],[908,556,26]], spark: [[124,166,27],[140,272,20],[366,338,26],[20,448,22]], heart: [[746,327,21],[474,641,14],[138,824,25]], drop: [[10,818,18],[70,823,21],[42,865,20],[655,865,18],[885,403,13]] },
  { at: [280, 400],
    dots: [[267,33,10],[338,43,5],[410,36,11],[510,20,5],[553,18,8],[435,54,5],[457,92,4],[435,118,5],[453,152,6],[565,120,7],[651,143,9],[705,116,13],[736,137,7],[747,94,9],[783,75,10],[776,31,12],[776,127,6],[288,77,12],[321,84,7],[245,71,9],[261,97,5],[363,213,9],[702,182,7],[727,236,6],[780,235,6],[708,270,10],[743,263,4],[534,239,4],[478,275,7],[520,269,6],[550,278,6],[575,298,7],[519,305,11],[619,346,6],[619,375,5],[796,392,6],[502,449,5],[497,472,10],[674,480,6],[688,530,10],[720,514,7],[750,520,5],[751,562,7],[762,609,7],[789,500,6],[385,467,11],[367,437,8],[421,461,5],[367,497,6],[372,523,7],[408,495,4],[374,558,8],[401,577,3],[453,606,10],[488,608,13],[529,599,8],[634,608,12],[626,579,6],[503,641,6],[529,625,3],[467,643,3],[614,640,7],[762,652,7],[343,631,7],[301,632,6],[306,669,5],[321,702,9],[610,735,8],[587,746,4],[586,776,5],[620,773,12],[629,803,5],[612,834,6],[633,855,5],[739,837,12],[378,811,5]],
    star: [[184,76,23],[752,194,25],[579,603,25],[629,681,22],[666,828,23]], gear: [], spark: [[476,40,25],[644,422,25],[322,575,20]], heart: [], drop: [[375,777,12],[453,775,14],[489,782,13],[657,640,9],[725,655,10]] },
  { at: [0, 100],
    dots: [[56,60,10],[93,69,5],[134,97,6],[141,65,9],[157,11,7],[193,31,9],[248,17,7],[303,119,8],[270,123,5],[342,131,6],[151,149,9],[95,179,9],[150,181,5],[5,154,6],[57,173,6],[321,223,6],[328,257,4],[284,265,7],[311,283,9],[180,249,12],[192,296,6],[343,386,12],[317,432,8],[253,496,16],[207,519,5],[74,523,6],[42,553,8],[95,553,11],[108,578,8],[140,565,7],[239,547,9],[268,582,8],[89,630,6],[214,679,8],[241,681,8],[375,736,5],[24,721,7],[152,819,6],[151,791,5],[9,854,9],[255,882,5],[330,880,7],[374,879,4],[226,912,13],[152,910,6],[195,911,5],[378,518,9],[506,52,7],[616,20,7],[793,44,6]],
    star: [[15,37,21],[184,540,24],[332,567,26],[108,862,24]], gear: [], spark: [[120,137,29],[294,42,18],[236,282,19],[35,491,32],[48,612,25],[5,204,20]], heart: [], drop: [] },
  { at: [0, 0],
    dots: [[8,125,11],[55,134,7],[89,174,6],[210,133,8],[225,123,4],[294,118,8],[318,154,8],[355,143,12],[368,177,9],[341,171,5],[239,205,9],[68,232,7],[84,230,6],[38,244,8],[38,271,4],[129,270,6],[131,287,6],[243,260,12],[367,240,8],[310,246,4],[280,298,8],[374,205,5],[245,310,5]],
    star: [[327,211,22],[202,283,25]], gear: [[262,165,26]], spark: [[329,292,17]], heart: [], drop: [] },
  { at: [100, 30],
    dots: [[183,47,12],[240,40,7],[361,51,8],[400,34,4],[422,59,12],[154,77,6],[141,59,5],[289,128,7],[293,154,5],[295,194,7],[326,187,6],[372,185,6],[457,125,3],[258,206,12],[206,262,7],[180,285,6],[211,308,6],[317,230,7],[180,320,5],[244,307,7],[303,366,8],[343,361,6],[482,286,11],[162,350,7],[185,423,6],[270,408,9],[262,440,6],[191,546,5],[180,578,5],[154,615,12],[197,629,6],[404,641,12],[380,594,7],[420,600,8],[442,619,6],[316,704,12],[352,695,10],[247,712,7],[257,735,6],[283,726,5],[127,728,6],[428,775,7],[420,893,5],[442,904,7],[456,936,13],[415,939,6],[337,902,8]],
    star: [[119,353,20],[400,556,22],[369,928,24],[470,417,29]], gear: [], spark: [[276,75,25],[289,308,21],[222,458,29]], heart: [[197,94,19],[153,670,24]], drop: [] },
  { at: [-200, 340],
    dots: [[518,48,12],[551,30,6],[603,49,6],[55,213,10],[30,182,5],[1104,145,8],[1147,116,6],[1180,73,7],[310,456,8],[350,463,6],[500,457,7],[533,456,4]],
    star: [[1105,88,32]], gear: [], spark: [[1336,130,25],[710,452,18]], heart: [[1057,177,22]], drop: [] }
];
for (const region of regions) {
  const group = add("g", { transform: `translate(${region.at}) scale(.33333)` }, tile);
  for (const [cx, cy, r] of region.dots) add("circle", { cx, cy, r }, group);
  for (const kind in shapes) {
    for (const [x, y, r] of region[kind] || []) {
      add("path", { d: shapes[kind](x, y, r) }, group);
      if (kind === "gear") add("circle", { cx: x, cy: y, r: r * 0.4 }, group);
    }
  }
}
```
